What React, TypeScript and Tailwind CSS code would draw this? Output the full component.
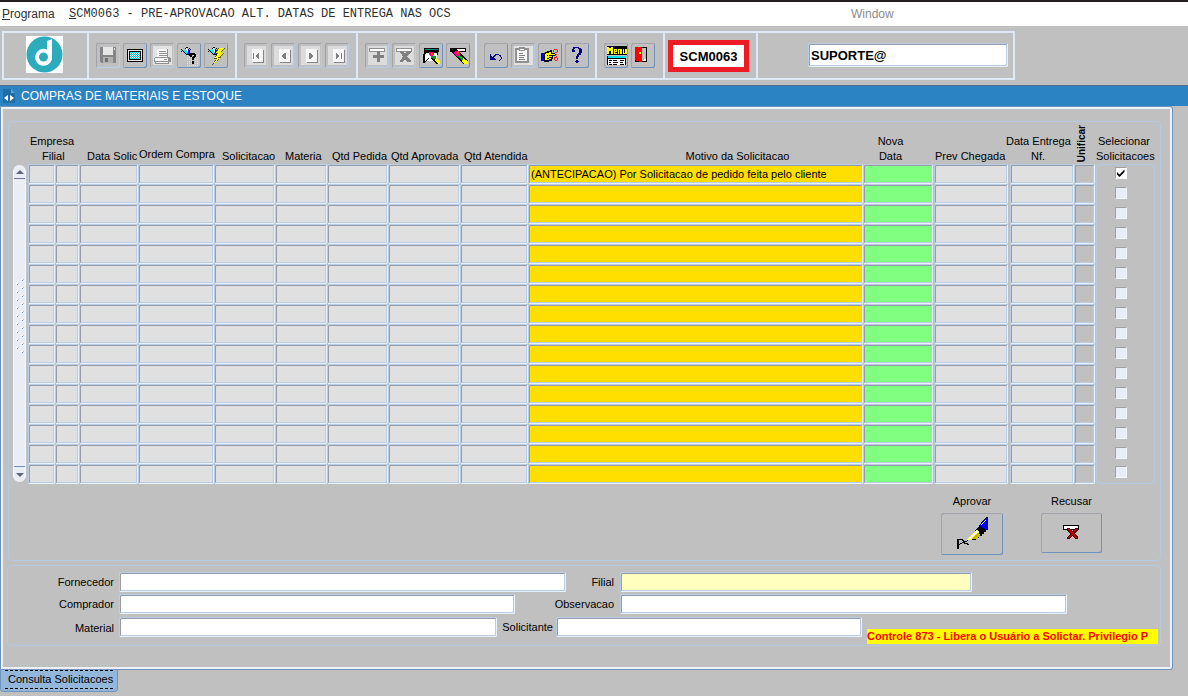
import { useState } from 'react'
import type { ReactNode } from 'react'
import clsx from 'clsx'

type Tool = { label: string; disabled?: boolean; icon: ReactNode }

type Column = { key: string; col: string; cell: string; input: string }

const GREY = 'bg-[#e0e0e0]'

const COLUMNS: Column[] = [
  { key: 'Empresa', col: 'w-[27px]', cell: '', input: GREY },
  { key: 'Filial', col: 'w-[24px]', cell: '', input: GREY },
  { key: 'Data Solic', col: 'w-[59px]', cell: '', input: GREY },
  { key: 'Ordem Compra', col: 'w-[76px]', cell: '', input: GREY },
  { key: 'Solicitacao', col: 'w-[61px]', cell: '', input: GREY },
  { key: 'Material', col: 'w-[52px]', cell: '', input: GREY },
  { key: 'Qtd Pedida', col: 'w-[61px]', cell: '', input: GREY },
  { key: 'Qtd Aprovada', col: 'w-[72px]', cell: '', input: GREY },
  { key: 'Qtd Atendida', col: 'w-[68px]', cell: '', input: GREY },
  { key: 'Motivo da Solicitacao', col: '', cell: '', input: 'bg-[#ffdf00]' },
  { key: 'Nova Data', col: 'w-[71px]', cell: 'pr-px', input: 'bg-[#80ff80]' },
  { key: 'Prev Chegada', col: 'w-[76px]', cell: 'pr-0.5', input: GREY },
  { key: 'Data Entrega Nf.', col: 'w-[64px]', cell: '', input: GREY },
  { key: 'Unificar', col: 'w-[22px]', cell: 'pr-px', input: 'bg-[#c0c0c0]' },
]

const MOTIVO = '(ANTECIPACAO) Por Solicitacao de pedido feita pelo cliente'
const ROWS = Array.from({ length: 16 }, (_, i) => i)

const SUNKEN =
  'border rounded-[2px] border-t-[#b9cde5] border-l-[#b9cde5] border-r-[#e9f1fa] border-b-[#e9f1fa] shadow-[inset_1px_1px_0_#989ca8,inset_-1px_-1px_0_#b9cde5] outline-none'

function Glyph({ children }: { children: ReactNode }) {
  return (
    <svg viewBox="0 0 72 75" className="w-6 h-[25px] block" shapeRendering="crispEdges" aria-hidden="true">
      {children}
    </svg>
  )
}

// dither fill, one 3-unit square on every other cell
function Dots({ x, y, cols, rows, fill, step = 1 }: { x: number; y: number; cols: number; rows: number; fill: string; step?: number }) {
  const cells: ReactNode[] = []
  for (let r = 0; r < rows; r += step) {
    for (let c = 0; c < cols; c++) {
      if ((c + r) % 2 === 0) cells.push(<rect key={`${r}-${c}`} x={x + c * 3} y={y + r * 3} width="3" height="3" fill={fill} />)
    }
  }
  return <g>{cells}</g>
}

function Page({ children }: { children: ReactNode }) {
  return (
    <Glyph>
      <rect x="9" y="9" width="57" height="57" fill="#dcdcdc" />
      <rect x="27" y="21" width="33" height="39" fill="#858585" />
      <rect x="24" y="18" width="33" height="39" fill="#f6f6f6" />
      <g fill="#808080">{children}</g>
    </Glyph>
  )
}

function Brush() {
  return (
    <g>
      <path d="M12 15H27L66 54V63H54L12 24Z" fill="#000" />
      <path d="M51 45L66 54V63H54L48 54Z" fill="#ffff00" />
      <path d="M39 36L51 42V51H45L36 42Z" fill="#00a020" />
      <path d="M27 24H36L42 30V36L33 42L24 33Z" fill="#ff0080" />
      <rect x="33" y="27" width="6" height="6" fill="#ff4000" />
    </g>
  )
}

// small pencil used by the two query buttons
function QueryPencil() {
  return (
    <g>
      <path d="M12 18H15V21H12ZM15 21H18V24H15ZM12 24H15V27H12ZM18 24H21V27H18ZM21 27H24V30H21ZM24 30H27V33H24ZM27 33H30V36H27Z" fill="#000" />
      <path d="M18 21H24V18H27V24H30V33H27V30H24V27H21V24H18Z" fill="#00f0f0" />
      <path d="M27 15H30V18H33V24H36V30H33V27H30V21H27Z" fill="#fff" />
      <path d="M33 18H36V21H39V30H36V33H30V30H33Z" fill="#0000ff" />
      <path d="M24 15H27V12H30V15H27V18H24ZM30 12H33V15H30ZM36 15H39V18H36ZM39 18H42V21H39ZM36 30H42V36H30V33H36Z" fill="#000" />
    </g>
  )
}

const FILE_TOOLS: Tool[] = [
  {
    label: 'Salvar',
    disabled: true,
    icon: (
      <Glyph>
        <path d="M12 12H57L60 15V60H15L12 57Z" fill="#858585" />
        <rect x="21" y="12" width="30" height="24" fill="#e6e6e6" />
        <rect x="54" y="15" width="3" height="6" fill="#e6e6e6" />
        <rect x="21" y="42" width="30" height="18" fill="#b0b0b0" />
        <rect x="27" y="45" width="9" height="12" fill="#707070" />
      </Glyph>
    ),
  },
  {
    label: 'Tela',
    icon: (
      <Glyph>
        <rect x="12" y="18" width="48" height="39" fill="#000" />
        <rect x="15" y="21" width="42" height="33" fill="#e8e8e8" />
        <rect x="18" y="24" width="36" height="27" fill="#000" />
        <rect x="21" y="27" width="30" height="21" fill="#fff" />
        <Dots x={21} y={27} cols={10} rows={7} fill="#00c0d0" />
      </Glyph>
    ),
  },
  {
    label: 'Imprimir',
    disabled: true,
    icon: (
      <Glyph>
        <rect x="9" y="9" width="57" height="57" fill="#e2e2e2" />
        <path d="M24 18H54V42H24Z" fill="#909090" />
        <path d="M21 18H51V42H21Z" fill="#fafafa" />
        <path d="M27 24H48V27H27ZM27 30H51V33H27ZM27 36H51V39H27Z" fill="#909090" />
        <path d="M15 42H57L63 48V57H57V63H15V57H12V45Z" fill="#909090" />
        <path d="M15 45H54V54H15ZM18 57H54V60H18Z" fill="#f4f4f4" />
        <path d="M42 48H51V51H42Z" fill="#909090" />
      </Glyph>
    ),
  },
  {
    label: 'Entrar consulta',
    icon: (
      <Glyph>
        <QueryPencil />
        <Dots x={30} y={36} cols={11} rows={11} step={2} fill="#ffff00" />
        <path d="M39 30H54V33H57V42H54V45H51V51H45V42H48V39H51V36H45V42H39V39H36V33H39Z" fill="#000" />
        <rect x="45" y="54" width="6" height="9" fill="#000" />
      </Glyph>
    ),
  },
  {
    label: 'Executar consulta',
    icon: (
      <Glyph>
        <QueryPencil />
        <path d="M42 15H63L51 30H63L48 42H54L24 66L36 48H30L39 33H33Z" fill="#605000" />
        <path d="M45 15H61L48 31H59L42 44H50L30 61L39 46H33L42 31H36Z" fill="#ffff00" />
      </Glyph>
    ),
  },
]

const NAV_TOOLS: Tool[] = [
  { label: 'Primeiro', disabled: true, icon: <Page><path d="M27 30H30V48H27ZM45 30V48L33 39Z" /></Page> },
  { label: 'Anterior', disabled: true, icon: <Page><path d="M45 30V48H42L30 39L42 30Z" /></Page> },
  { label: 'Proximo', disabled: true, icon: <Page><path d="M33 30V48H36L48 39L36 30Z" /></Page> },
  { label: 'Ultimo', disabled: true, icon: <Page><path d="M48 30H51V48H48ZM33 30V48L45 39Z" /></Page> },
]

const RECORD_TOOLS: Tool[] = [
  {
    label: 'Inserir registro',
    disabled: true,
    icon: (
      <Glyph>
        <rect x="9" y="9" width="57" height="57" fill="#dcdcdc" />
        <rect x="12" y="15" width="48" height="12" fill="#909090" />
        <rect x="15" y="18" width="42" height="6" fill="#fff" />
        <path d="M36 24H45V36H57V45H45V57H36V45H24V36H36Z" fill="#808080" />
      </Glyph>
    ),
  },
  {
    label: 'Excluir registro',
    disabled: true,
    icon: (
      <Glyph>
        <rect x="9" y="9" width="57" height="57" fill="#dcdcdc" />
        <rect x="12" y="15" width="48" height="12" fill="#909090" />
        <rect x="15" y="18" width="42" height="6" fill="#fff" />
        <path d="M24 24H33L39 33L45 24H57V27L45 40L57 54V57H45L39 48L33 57H24V54L33 40L24 27Z" fill="#808080" />
      </Glyph>
    ),
  },
  {
    label: 'Limpar tela',
    icon: (
      <Glyph>
        <path d="M15 15H60V27H57V36H45V27H21V33H18V60H12V33H15Z" fill="#000" />
        <path d="M18 18H57V21H18Z" fill="#008080" />
        <path d="M21 27H54V54H36L18 60V36H21Z" fill="#fff" />
        <path d="M21 27H54V30H21ZM18 54H21V51H24V48H27V45H30V48H27V51H24V54H21V57H18Z" fill="#000" />
        <path d="M21 54H33V60H18V57H21Z" fill="#c0c0c0" />
        <path d="M36 45L45 57L54 63H57V60L45 45Z" fill="#000" />
        <path d="M51 45L63 54V63H57L48 54Z" fill="#ffff00" />
        <path d="M39 39L51 39V48H45L36 45Z" fill="#00a020" />
        <path d="M30 27H39L45 33L39 42L30 36Z" fill="#ff0080" />
        <rect x="36" y="30" width="6" height="6" fill="#ff4000" />
      </Glyph>
    ),
  },
  {
    label: 'Limpar registro',
    icon: (
      <Glyph>
        <rect x="12" y="15" width="48" height="12" fill="#000" />
        <rect x="15" y="18" width="42" height="6" fill="#fff" />
        <Brush />
      </Glyph>
    ),
  },
]

const EDIT_TOOLS: Tool[] = [
  {
    label: 'Desfazer',
    icon: (
      <Glyph>
        <path d="M18 33H21V39H24V42H27V39H30V36H33V33H45V36H51V42H54V48H51V51H48V54H45V51H48V48H51V42H48V39H45V36H36V39H33V42H30V45H33V48H36V51H18Z" fill="#000080" />
      </Glyph>
    ),
  },
  {
    label: 'Colar',
    disabled: true,
    icon: (
      <Glyph>
        <rect x="9" y="9" width="57" height="57" fill="#e2e2e2" />
        <path d="M15 18H51V57H15Z" fill="none" stroke="#909090" strokeWidth="6" />
        <rect x="18" y="21" width="30" height="33" fill="#f6f6f6" />
        <path d="M24 12H42V24H24Z" fill="#909090" />
        <path d="M27 18H39V21H27Z" fill="#fff" />
        <path d="M24 30H36V33H24ZM24 36H42V39H24ZM24 42H39V45H24ZM24 48H42V51H24Z" fill="#808080" />
      </Glyph>
    ),
  },
  {
    label: 'Lista de valores',
    icon: (
      <Glyph>
        <rect x="9" y="30" width="9" height="24" fill="#0000e0" />
        <path d="M18 30H21V27H27V24H36V21H42V30H51V33H54V39H45V48H42V54H33V57H18Z" fill="#000" />
        <path d="M21 33H24V30H33V27H39V33H51V36H33V39H42V42H33V45H39V48H33V51H21Z" fill="#ffff00" />
        <path d="M27 36H30V39H27ZM27 45H33V48H27Z" fill="#000" />
        <path d="M48 18H57V21H60V27H57V30H51V27H57V21H48V27H45V21H48ZM48 42H57V45H60V51H57V54H51V51H57V45H51V51H48ZM54 33H57V36H54V39H57V42H54V39H51V36H54Z" fill="#f02020" />
      </Glyph>
    ),
  },
  {
    label: 'Ajuda',
    icon: (
      <Glyph>
        <path d="M24 12H42V15H48V18H51V30H48V36H42V42H39V48H33V39H36V33H39V30H42V18H39V15H30V18H27V21H30V27H21V18H24Z" fill="#000080" />
        <path d="M33 51H39V54H42V57H39V60H33V57H30V54H33Z" fill="#000080" />
      </Glyph>
    ),
  },
]

const EXIT_TOOLS: Tool[] = [
  {
    label: 'Menu',
    icon: (
      <Glyph>
        <rect x="9" y="9" width="60" height="27" fill="#000" />
        <path d="M9 12H15L18 18L21 12H27V33H22V20L18 27L14 20V33H9ZM30 18H39V27H33V30H39V33H30ZM42 18H53V33H49V22H46V33H42ZM56 18H60V30H64V18H69V33H56Z" fill="#ffff00" />
        <rect x="33" y="21" width="3" height="3" fill="#000" />
        <rect x="9" y="39" width="57" height="27" fill="#000" />
        <rect x="12" y="39" width="54" height="6" fill="#00e0f0" />
        <rect x="12" y="48" width="51" height="18" fill="#fff" />
        <path d="M15 51H24V54H15ZM27 51H39V54H27ZM48 51H60V54H48ZM15 57H21V60H15ZM27 57H42V60H27ZM48 57H57V60H48ZM15 63H24V66H15ZM27 63H39V66H27ZM48 63H60V66H48Z" fill="#000" />
      </Glyph>
    ),
  },
  {
    label: 'Sair',
    icon: (
      <Glyph>
        <rect x="12" y="12" width="36" height="45" fill="#000" />
        <rect x="30" y="15" width="15" height="39" fill="#c0c0c0" />
        <path d="M36 51H39V48H45V54H36Z" fill="#fff" />
        <path d="M12 12H30L33 18V57H27L12 51Z" fill="#ff0000" />
        <rect x="24" y="27" width="6" height="6" fill="#ffff00" />
      </Glyph>
    ),
  },
]

function ToolGroup({ tools, className }: { tools: Tool[]; className: string }) {
  return (
    <div className={clsx('flex items-start gap-[3px] pt-2.5 pl-[7px] border-r-2 border-[#dfe9f5]', className)}>
      {tools.map(t => (
        <button
          key={t.label}
          type="button"
          aria-label={t.label}
          disabled={t.disabled}
          className={clsx(
            'w-6 h-[25px] rounded-[2px] shrink-0',
            t.disabled
              ? 'shadow-[inset_1px_1px_0_#a2a4aa,inset_-1px_-1px_0_#b9cde5]'
              : 'shadow-[inset_1px_1px_0_#a2a4aa,inset_-1px_-1px_0_#6f93bb]'
          )}
        >
          {t.icon}
        </button>
      ))}
    </div>
  )
}

function Logo() {
  return (
    <svg viewBox="0 0 37 37" className="w-[37px] h-[37px]" role="img" aria-label="Logo">
      <rect width="37" height="37" fill="#fff" />
      <circle cx="18.500" cy="18.500" r="18" fill="#2cabbd" />
      <path d="M21 5L26 3V20A8.500 8.500 0 1 1 21 13.500Z" fill="#fff" />
      <circle cx="17.500" cy="21" r="4.500" fill="#2cabbd" />
    </svg>
  )
}

function Field({ id, label, labelClass, inputClass }: { id: string; label: string; labelClass: string; inputClass: string }) {
  return (
    <>
      <label htmlFor={id} className={clsx('shrink-0 text-right whitespace-nowrap', labelClass)}>{label}</label>
      <input id={id} type="text" className={clsx('h-5 min-w-0 px-1', SUNKEN, inputClass)} />
    </>
  )
}

export default function App() {
  const [selected, setSelected] = useState<number[]>([0])

  const toggle = (row: number) =>
    setSelected(s => (s.includes(row) ? s.filter(r => r !== row) : [...s, row]))

  return (
    <div className="min-h-screen bg-[#c0c0c0] text-black text-[11px] leading-[15px] font-['Liberation_Sans',Arial,sans-serif]">
      {/* Menu bar */}
      <nav className="flex h-[26px] items-center bg-white border-t-2 border-[#231f20] text-[12px] pl-0.5">
        <button type="button" className="w-[67px] text-left text-[#303030]"><u>P</u>rograma</button>
        <button type="button" className="flex-[782] text-left whitespace-nowrap text-[#303030] font-['Liberation_Mono',monospace]">
          <u>S</u>CM0063 - PRE-APROVACAO ALT. DATAS DE ENTREGA NAS OCS
        </button>
        <button type="button" className="flex-[337] text-left text-[#8c8c8c]">Window</button>
      </nav>

      {/* Toolbar */}
      <div className="flex w-fit h-[49px] mt-[5px] ml-0.5 border-2 border-[#dfe9f5]">
        <div className="w-[85px] flex items-center justify-center pb-0.5 pr-0.5 border-r-2 border-[#dfe9f5]">
          <Logo />
        </div>
        <ToolGroup tools={FILE_TOOLS} className="w-[148px]" />
        <ToolGroup tools={NAV_TOOLS} className="w-[121px]" />
        <ToolGroup tools={RECORD_TOOLS} className="w-[119px]" />
        <ToolGroup tools={EDIT_TOOLS} className="w-[120px]" />
        <ToolGroup tools={EXIT_TOOLS} className="w-[68px]" />
        <div className="w-[93px] pt-[7px] pl-[3px] border-r-2 border-[#dfe9f5]">
          <div className="w-[81px] h-8 flex items-center justify-center bg-white border-[5px] border-[#ed1c24] text-[13px] font-bold">
            SCM0063
          </div>
        </div>
        <div className="w-[255px] pt-2.5 pl-[50px]">
          <input
            type="text"
            aria-label="Usuario"
            defaultValue="SUPORTE@"
            className={clsx('w-[200px] h-6 px-0.5 bg-white text-[13px] font-bold', SUNKEN)}
          />
        </div>
      </div>

      {/* Window title */}
      <header className="flex items-center h-[21px] mt-[5px] pl-[3px] gap-1.5 bg-[#2b83c4] border-t border-[#55708f] text-white text-[12px]">
        <svg viewBox="0 0 12 14" className="w-3 h-3.5" aria-hidden="true">
          <path d="M0 0H8L12 4V14H0Z" fill="#1c6ea6" />
          <path d="M8 0V4H12Z" fill="#5aa5d8" />
          <path d="M5 6V12L1 9ZM7 6L11 9L7 12Z" fill="#fff" />
        </svg>
        <h1>COMPRAS DE MATERIAIS E ESTOQUE</h1>
      </header>

      <main className="mr-[15px] border border-[#6f93bb] rounded-r-[3px] shadow-[inset_0_0_0_2px_#eef2f8] pt-3.5 pl-[7px] pr-[11px] pb-[23px]">
        <section className="border border-[#b5c8e0] rounded-[4px] pb-[5px]">
          <div className="flex gap-[2px] pl-1 pr-[5px]">
            {/* Record scrollbar */}
            <div className="w-[13px] shrink-0 mt-[43px] mb-0.5 flex flex-col rounded-full bg-[#e9eef6] border-x border-[#f6f9fd] overflow-hidden">
              <button type="button" aria-label="Subir" className="h-3.5 flex items-center justify-center border-b border-[#6b7594]">
                <svg viewBox="0 0 8 4" className="w-2 h-1" aria-hidden="true"><path d="M4 0L8 4H0Z" fill="#5d6480" /></svg>
              </button>
              <div className="flex-1 flex items-center justify-center pb-3">
                <svg viewBox="0 0 8 76" className="w-2 h-[76px]" shapeRendering="crispEdges" aria-hidden="true">
                  {Array.from({ length: 19 }, (_, i) => {
                    const x = i % 2 === 0 ? 6 : 1
                    return (
                      <g key={i}>
                        <rect x={x - 1} y={i * 4} width="2" height="2" fill="#fff" />
                        <rect x={x} y={i * 4 + 1} width="1" height="1" fill="#6f93bb" />
                        <rect x={x + 1} y={i * 4} width="1" height="1" fill="#a9bfdb" />
                      </g>
                    )
                  })}
                </svg>
              </div>
              <button type="button" aria-label="Descer" className="h-4 flex items-center justify-center border-t border-[#6f93bb]">
                <svg viewBox="0 0 8 4" className="w-2 h-1" aria-hidden="true"><path d="M0 0H8L4 4Z" fill="#5d6480" /></svg>
              </button>
            </div>

            <table className="flex-1 w-full table-fixed border-separate border-spacing-0">
              <colgroup>
                {COLUMNS.map(c => <col key={c.key} className={c.col} />)}
                <col className="w-[59px]" />
              </colgroup>
              <thead>
                <tr className="h-[42px] align-bottom whitespace-nowrap text-left *:font-normal">
                  <th colSpan={2} className="pl-0.5">Empresa<br /><span className="pl-3">Filial</span></th>
                  <th className="pl-2">Data Solic</th>
                  <th className="pl-px pb-0.5">Ordem Compra</th>
                  <th className="pl-2">Solicitacao</th>
                  <th className="pl-2.5">Materia</th>
                  <th className="pl-[5px]">Qtd Pedida</th>
                  <th className="pl-[3px]">Qtd Aprovada</th>
                  <th className="pl-1">Qtd Atendida</th>
                  <th className="text-center pl-[84px]">Motivo da Solicitacao</th>
                  <th className="text-center pr-4">Nova<br />Data</th>
                  <th className="pl-px">Prev Chegada</th>
                  <th><span className="block -ml-1">Data Entrega</span><span className="pl-[21px]">Nf.</span></th>
                  <th className="pb-0.5"><span className="block w-4 [writing-mode:vertical-rl] rotate-180 text-[10px] font-bold">Unificar</span></th>
                  <th><span className="block pl-0.5">Selecionar</span>Solicitacoes</th>
                </tr>
              </thead>
              <tbody>
                {ROWS.map(row => (
                  <tr key={row} className="h-5 group">
                    {COLUMNS.map(c => (
                      <td key={c.key} className={clsx('p-0', c.cell)}>
                        <input
                          type="text"
                          aria-label={`${c.key} ${row + 1}`}
                          defaultValue={row === 0 && c.key === 'Motivo da Solicitacao' ? MOTIVO : ''}
                          className={clsx('block w-full h-5 px-0.5', SUNKEN, c.input)}
                        />
                      </td>
                    ))}
                    <td className="p-0 pb-[3px] pl-[18px] border-x border-[#b5c8e0] group-first:border-t group-first:rounded-t-[4px] group-last:border-b group-last:rounded-b-[4px]">
                      <span className="relative block w-3 h-3">
                        <input
                          type="checkbox"
                          aria-label={`Selecionar ${row + 1}`}
                          checked={selected.includes(row)}
                          onChange={() => toggle(row)}
                          className="block appearance-none w-3 h-3 bg-[#e9eef6] checked:bg-white border border-t-[#a0a0a0] border-l-[#a0a0a0] border-r-[#f4f7fb] border-b-[#f4f7fb]"
                        />
                        {selected.includes(row) && (
                          <svg viewBox="0 0 12 12" className="absolute inset-0 pointer-events-none" aria-hidden="true">
                            <path d="M2 5L4.500 7.500L9.500 2.500V5L4.500 10L2 7.500Z" fill="#000" />
                          </svg>
                        )}
                      </span>
                    </td>
                  </tr>
                ))}
              </tbody>
            </table>
          </div>

          {/* Actions */}
          <div className="flex items-start justify-end gap-[38px] mt-2.5 pr-[58px]">
            <div className="flex flex-col items-center gap-1">
              <label htmlFor="aprovar">Aprovar</label>
              <button
                id="aprovar"
                type="button"
                className="w-[62px] h-[42px] flex items-start pt-1 pl-4 rounded-[2px] shadow-[inset_1px_1px_0_#a2a4aa,inset_-1px_-1px_0_#6f93bb]"
              >
                <svg viewBox="0 0 93 99" className="w-[31px] h-[33px]" shapeRendering="crispEdges" aria-hidden="true">
                  <path d="M90 0H93V39H87V45H81V51H75V57H66V63H57V69H36L27 75L66 27L81 6Z" fill="#000" />
                  <path d="M69 24L87 3H93V36L87 39L81 36L69 30Z" fill="#0000e0" />
                  <path d="M72 24L84 9H87L75 24Z" fill="#fff" />
                  <path d="M60 36L30 69H42L66 45Z" fill="#ffff60" />
                  <path d="M36 66L60 39L63 42L42 66Z" fill="#fff" />
                  <path d="M42 66H57L66 57H69V51L63 48Z" fill="#c8b800" />
                  <path d="M0 66H18V69H21V72H27V75H24V78H33V81H36V84H30V81H21V78H15V81H9V84H6V96H0ZM6 69V81H9V78H15V75H18V72H15V69Z" fill="#000" fillRule="evenodd" />
                </svg>
              </button>
            </div>
            <div className="flex flex-col items-center gap-1">
              <label htmlFor="recusar">Recusar</label>
              <button
                id="recusar"
                type="button"
                className="w-[61px] h-10 flex items-start pt-3 pl-[22px] rounded-[2px] shadow-[inset_1px_1px_0_#a2a4aa,inset_-1px_-1px_0_#6f93bb]"
              >
                <svg viewBox="0 0 48 45" className="w-4 h-[15px]" shapeRendering="crispEdges" aria-hidden="true">
                  <rect width="48" height="15" fill="#000" />
                  <rect x="3" y="3" width="42" height="9" fill="#fff" />
                  <path d="M12 9H21L27 18L36 9H45V15L36 27L45 36V42H36L27 33L21 42H12V36L21 27L12 15Z" fill="#500000" />
                  <path d="M15 12H21L27 21L36 12H42L33 24L42 39H36L27 30L18 39H15L24 27Z" fill="#c00000" />
                </svg>
              </button>
            </div>
          </div>
        </section>

        {/* Details */}
        <section className="-ml-px mt-1 flex flex-col gap-0.5 h-[81px] border border-[#b5c8e0] rounded-[4px] pt-1.5 overflow-hidden">
          <div className="flex items-center">
            <Field id="fornecedor" label="Fornecedor" labelClass="w-[106px] mr-[5px]" inputClass="w-[447px] bg-white" />
            <Field id="filial" label="Filial" labelClass="w-12 mr-[6px]" inputClass="w-[352px] bg-[#ffffc0]" />
          </div>
          <div className="flex items-center">
            <Field id="comprador" label="Comprador" labelClass="w-[106px] mr-[5px]" inputClass="w-[396px] bg-white" />
            <Field id="observacao" label="Observacao" labelClass="w-[99px] mr-[6px]" inputClass="w-[447px] bg-white" />
          </div>
          <div className="flex items-start pt-px">
            <Field id="material" label="Material" labelClass="w-[106px] mr-[5px] pt-1" inputClass="w-[378px] bg-white" />
            <Field id="solicitante" label="Solicitante" labelClass="w-14 mr-[3px] pt-[3px]" inputClass="w-[306px] bg-white" />
            <p className="flex-1 min-w-0 mt-3 ml-[5px] mr-0.5 bg-[#ffff00] text-[#ff0000] font-bold whitespace-nowrap overflow-hidden">
              Controle 873 - Libera o Usuário a Solictar. Privilegio P
            </p>
          </div>
        </section>
      </main>

      {/* Tabs */}
      <button
        type="button"
        className="block h-[22px] pl-1 pr-1 pb-0.5 bg-[#93b7da] border border-t-0 border-[#6f93bb] rounded-b-[4px]"
      >
        <span className="block pl-[3px] py-px border-y border-dashed border-black">Consulta Solicitacoes</span>
      </button>
    </div>
  )
}
